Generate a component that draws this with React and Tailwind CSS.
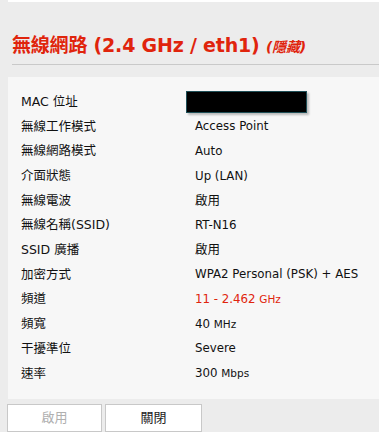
import React from "react";

const rows = [
  ["MAC 位址", "mac"],
  ["無線工作模式", "Access Point"],
  ["無線網路模式", "Auto"],
  ["介面狀態", "Up (LAN)"],
  ["無線電波", "cjk"],
  ["無線名稱(SSID)", "RT-N16"],
  ["SSID 廣播", "cjk"],
  ["加密方式", "WPA2 Personal (PSK) + AES"],
  ["頻道", "channel"],
  ["頻寬", "bw"],
  ["干擾準位", "Severe"],
  ["速率", "rate"],
];

function Value({ v }) {
  if (v === "mac")
    return (
      <div className="h-[22px] w-[121px] -ml-[9px] bg-black border border-[#1f4f57] shadow-[2px_2px_2px_rgba(0,0,0,0.25)]" />
    );
  if (v === "cjk") return <span className="text-[12.5px]">啟用</span>;
  if (v === "channel")
    return (
      <span className="text-[#e0240c]">
        11 - 2.462 <span className="text-[10.5px]">GHz</span>
      </span>
    );
  if (v === "bw")
    return (
      <span>
        40 <span className="text-[10.5px]">MHz</span>
      </span>
    );
  if (v === "rate")
    return (
      <span>
        300 <span className="text-[10.5px]">Mbps</span>
      </span>
    );
  return <span>{v}</span>;
}

export default function App() {
  return (
    <div
      className="w-[379px] h-[432px] bg-[#ececec] overflow-hidden"
      style={{ fontFamily: '"DejaVu Sans", "Noto Sans CJK TC", sans-serif' }}
    >
      <div className="ml-[8px] h-[2px] bg-white" />
      <div className="ml-[12px] pt-[31px] h-[63px] border-b border-[#c9c9c9]">
        <span className="text-[#e0240c] font-bold text-[19px] leading-[24px] tracking-[-0.2px]">
          無線網路 (2.4 GHz / eth1){" "}
          <span className="italic font-bold text-[14px]">(隱藏)</span>
        </span>
      </div>
      <div className="ml-[8px] mt-[12px] h-[322px] bg-[#f7f7f7] pt-[13px] pl-[13px]">
        {rows.map(([k, v]) => (
          <div key={k} className="flex h-[24.7px] items-center text-[#111]">
            <div className="w-[174px] text-[12.5px]">{k}</div>
            <div className="text-[11.8px]">
              <Value v={v} />
            </div>
          </div>
        ))}
      </div>
      <div className="flex gap-[3px] ml-[7px] mt-[5px]">
        <button className="w-[95px] h-[28px] bg-white border border-[#c8c8c8] text-[#b0b0b0] text-[13px]">
          啟用
        </button>
        <button className="w-[97px] h-[28px] bg-white border border-[#c8c8c8] text-[#222] text-[13px]">
          關閉
        </button>
      </div>
    </div>
  );
}
